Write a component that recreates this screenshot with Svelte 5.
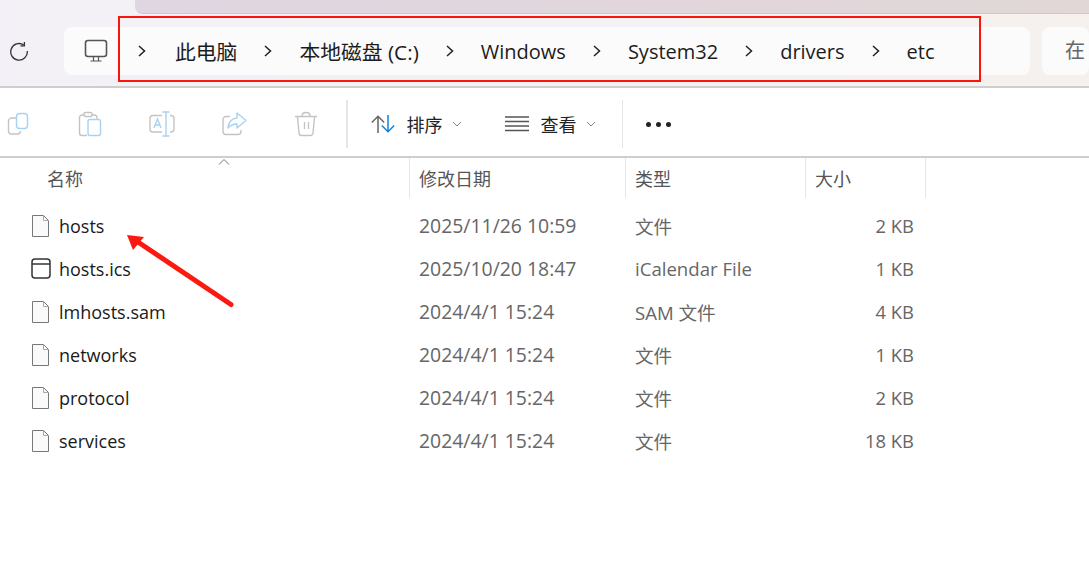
<script lang="ts">
	const crumbs = [
		{ label: '此电脑', cjk: true },
		{ label: '本地磁盘 (C:)', cjk: true },
		{ label: 'Windows' },
		{ label: 'System32' },
		{ label: 'drivers' },
		{ label: 'etc' }
	];
	const files = [
		{ name: 'hosts', date: '2025/11/26 10:59', type: '文件', size: '2 KB', icon: 'file' },
		{ name: 'hosts.ics', date: '2025/10/20 18:47', type: 'iCalendar File', size: '1 KB', icon: 'cal' },
		{ name: 'lmhosts.sam', date: '2024/4/1 15:24', type: 'SAM 文件', size: '4 KB', icon: 'file' },
		{ name: 'networks', date: '2024/4/1 15:24', type: '文件', size: '1 KB', icon: 'file' },
		{ name: 'protocol', date: '2024/4/1 15:24', type: '文件', size: '2 KB', icon: 'file' },
		{ name: 'services', date: '2024/4/1 15:24', type: '文件', size: '18 KB', icon: 'file' }
	];
</script>

<div class="window">
	<div class="titlebar"><div class="tab"></div></div>

	<div class="navbar">
		<svg class="refresh" width="20" height="20" viewBox="0 0 20 20" fill="none" stroke="#333" stroke-width="1.3">
			<path d="M14.6 3.9A8.3 8.3 0 1 0 18.3 10" />
			<path d="M15.4 1v3.8h-3.9" />
		</svg>
		<div class="address">
			<svg width="24" height="24" viewBox="0 0 24 24" fill="none" stroke="#555" stroke-width="1.6">
				<rect x="1.5" y="1.5" width="21" height="16" rx="2.5" />
				<path d="M9.5 18v3.5M14.5 18v3.5M6.5 22h11" stroke-width="1.2" />
			</svg>
			<div class="crumbs">
				{#each crumbs as c}
					<svg width="8" height="12" viewBox="0 0 8 12" fill="none" stroke="#222" stroke-width="1.5">
						<path d="M1 1l5.500 5-5.500 5" />
					</svg>
					<span class:cjk={c.cjk}>{c.label}</span>
				{/each}
			</div>
		</div>
		<div class="search">在</div>
	</div>

	<div class="toolbar">
		<div class="tools">
			<svg width="28" height="28" viewBox="0 0 28 28" fill="none" stroke="#c4c4c4" stroke-width="1.4">
				<path d="M12 8H7.500a3 3 0 0 0-3 3v10a3 3 0 0 0 3 3h6a3 3 0 0 0 3-3" />
				<rect x="12.500" y="3.500" width="11" height="15" rx="3" stroke="#a8d2f2" />
			</svg>
			<svg width="28" height="28" viewBox="0 0 28 28" fill="none" stroke="#c4c4c4" stroke-width="1.4">
				<path d="M8 5H6a2.500 2.500 0 0 0-2.500 2.500V23A2.500 2.500 0 0 0 6 25.500h5M21 9V7.500A2.500 2.500 0 0 0 18.500 5H16" />
				<rect x="8" y="2.500" width="8" height="4" rx="1.500" />
				<rect x="12" y="9.500" width="12.500" height="16" rx="2" stroke="#a8d2f2" />
			</svg>
			<svg width="28" height="28" viewBox="0 0 28 28" fill="none" stroke="#c4c4c4" stroke-width="1.4">
				<path d="M14 5.500H5a3 3 0 0 0-3 3V19a3 3 0 0 0 3 3h9M22 5.500h1a3 3 0 0 1 3 3V19a3 3 0 0 1-3 3h-1" />
				<path d="M14.500 2h7M18 2v24M14.500 26h7M6 18l3.500-9 3.500 9M7.200 15h4.600" stroke="#a8d2f2" />
			</svg>
			<svg width="28" height="28" viewBox="0 0 28 28" fill="none" stroke="#c4c4c4" stroke-width="1.4">
				<path d="M10 6.500H6a3 3 0 0 0-3 3v12a3 3 0 0 0 3 3h12a3 3 0 0 0 3-3v-1.500" />
				<path d="M17 3l9 7.500-9 7.500v-4c-4 0-6.500 1-9 4 .5-6 4-9.500 9-10z" stroke="#a8d2f2" stroke-linejoin="round" />
			</svg>
			<svg width="28" height="28" viewBox="0 0 28 28" fill="none" stroke="#c4c4c4" stroke-width="1.4">
				<path d="M3 6.500h22M10 6c0-2 1.500-3.500 4-3.500S18 4 18 6M5.500 7l1.500 16a2.500 2.500 0 0 0 2.500 2.500h9A2.500 2.500 0 0 0 21 23l1.500-16M12.500 12v7M16.500 12v7" />
			</svg>
		</div>
		<div class="sep"></div>
		<div class="action sort">
			<svg width="24" height="18" viewBox="0 0 24 18" fill="none" stroke-width="1.500">
				<path d="M7 18V1.500M.8 7.500L7 1.300l6.200 6.200" stroke="#666" />
				<path d="M17 0v16.500M10.800 10.500l6.200 6.200 6.200-6.200" stroke="#0f84d8" />
			</svg>
			<span>排序</span>
			<svg width="10" height="6" viewBox="0 0 10 6" fill="none" stroke="#888"><path d="M1 1l4 4 4-4" /></svg>
		</div>
		<div class="action view">
			<svg width="24" height="16" viewBox="0 0 24 16" fill="none" stroke="#555" stroke-width="1.300">
				<path d="M0 1h24M0 5.500h24M0 10h24M0 14.500h24" />
			</svg>
			<span>查看</span>
			<svg width="10" height="6" viewBox="0 0 10 6" fill="none" stroke="#888"><path d="M1 1l4 4 4-4" /></svg>
		</div>
		<div class="sep"></div>
		<div class="more"><i></i><i></i><i></i></div>
	</div>

	<div class="list">
		<div class="head">
			<div class="cell name-head">名称<svg class="sort-up" width="12" height="6" viewBox="0 0 12 6" fill="none" stroke="#777"><path d="M1 5.500l5-5 5 5" /></svg></div>
			<div class="cell">修改日期</div>
			<div class="cell">类型</div>
			<div class="cell">大小</div>
		</div>
		{#each files as f}
			<div class="row">
				<div class="name">
					{#if f.icon === 'file'}
						<svg width="20" height="22" viewBox="0 0 20 22" fill="#fafafa" stroke="#777" stroke-width="1">
							<path d="M1.500 .500h11l5 5v16h-16z" />
							<path d="M12.500 .500v5h5" fill="none" stroke="#aaa" />
						</svg>
					{:else}
						<svg width="20" height="22" viewBox="0 0 20 22" fill="none" stroke="#333" stroke-width="1.500">
							<rect x="1" y="1" width="18" height="19" rx="3" />
							<path d="M1 6h18" />
						</svg>
					{/if}
					<span>{f.name}</span>
				</div>
				<div class="date">{f.date}</div>
				<div class="type">{f.type}</div>
				<div class="size">{f.size}</div>
			</div>
		{/each}
	</div>

	<div class="highlight"></div>
	<svg class="arrow" width="130" height="90" viewBox="0 0 130 90">
		<path d="M105 71.500L12 9" stroke="#fb1a10" stroke-width="5" stroke-linecap="round" />
		<path d="M1 2l17 2-11 13z" fill="#fb1a10" />
	</svg>
</div>

<style>
	:global(body) {
		margin: 0;
		background: #fff;
	}

	.window {
		position: relative;
		width: 1089px;
		height: 574px;
		overflow: hidden;
		font-family: "Open Sans", "Noto Sans CJK SC", sans-serif;
		background: #fff;
	}

	.titlebar {
		height: 14px;
		padding-left: 135px;
		background: linear-gradient(90deg, #f3f1f7, #f5f1ef);
	}

	.tab {
		height: 13px;
		border-bottom: 1px solid #cfc9cf;
		border-bottom-left-radius: 8px;
		background: linear-gradient(90deg, #dfd6e2, #e1d7d6);
	}

	.navbar {
		display: flex;
		align-items: center;
		height: 70px;
		padding-top: 2px;
		border-bottom: 2px solid #d3cccc;
		background: linear-gradient(90deg, #f3f1f7, #f5f1ef);
	}

	.refresh {
		margin: 0 35px 0 9px;
	}

	.address {
		display: flex;
		align-items: center;
		width: 966px;
		height: 48px;
		padding-left: 20px;
		box-sizing: border-box;
		border-radius: 8px;
		background: #fbfbfb;
	}

	.crumbs {
		display: flex;
		align-items: center;
		gap: 27px;
		margin-left: 30px;
		font-size: 20px;
		color: #1c1c1c;
		white-space: nowrap;
	}

	.crumbs svg:first-child {
		margin-right: 2px;
	}

	.cjk {
		font-size: 20.800px;
	}

	.search {
		flex: 1;
		height: 48px;
		margin-left: 12px;
		padding-left: 23px;
		border-radius: 8px;
		background: #fbfbfb;
		font-size: 20px;
		line-height: 48px;
		color: #666;
	}

	.toolbar {
		display: flex;
		align-items: center;
		height: 64px;
		padding: 4px 0 0 4px;
		border-bottom: 2px solid #d3cccc;
		font-size: 18px;
		color: #222;
	}

	.tools {
		display: flex;
		gap: 44px;
	}

	.sep {
		width: 1.500px;
		height: 48px;
		margin-left: 26px;
		background: #e6e6e6;
	}

	.action {
		display: flex;
		align-items: center;
	}

	.action span {
		margin: 0 9px 0 12px;
	}

	.sort {
		margin-left: 23px;
	}

	.view {
		margin-left: 43px;
	}

	.more {
		display: flex;
		gap: 5px;
		margin-left: 23px;
	}

	.more i {
		width: 5px;
		height: 5px;
		border-radius: 50%;
		background: #222;
	}

	.head,
	.row {
		display: grid;
		grid-template-columns: 409px 216px 180px 121px;
	}

	.head {
		height: 40px;
		font-size: 18px;
		color: #555;
	}

	.cell {
		position: relative;
		padding: 2px 0 0 9px;
		border-left: 1px solid #e5e5e5;
		line-height: 38px;
	}

	.cell:last-child {
		border-right: 1px solid #e5e5e5;
	}

	.name-head {
		padding-left: 47px;
		border-left: none;
	}

	.sort-up {
		position: absolute;
		left: 218px;
		top: 1px;
	}

	.row {
		align-items: center;
		height: 43px;
		font-size: 18px;
		color: #666;
		white-space: nowrap;
	}

	.head + .row {
		margin-top: 6px;
	}

	.name {
		display: flex;
		align-items: center;
		gap: 8px;
		padding-left: 31px;
		color: #1a1a1a;
	}

	.date {
		padding-left: 10px;
		font-size: 19.400px;
	}

	.type {
		padding-left: 10px;
		font-size: 18.600px;
	}

	.size {
		padding-right: 12px;
		font-size: 18.400px;
		text-align: right;
	}

	.highlight {
		position: absolute;
		left: 118px;
		top: 16px;
		width: 859px;
		height: 62px;
		border: 2px solid #f9140c;
	}

	.arrow {
		position: absolute;
		left: 126px;
		top: 233px;
	}
</style>
